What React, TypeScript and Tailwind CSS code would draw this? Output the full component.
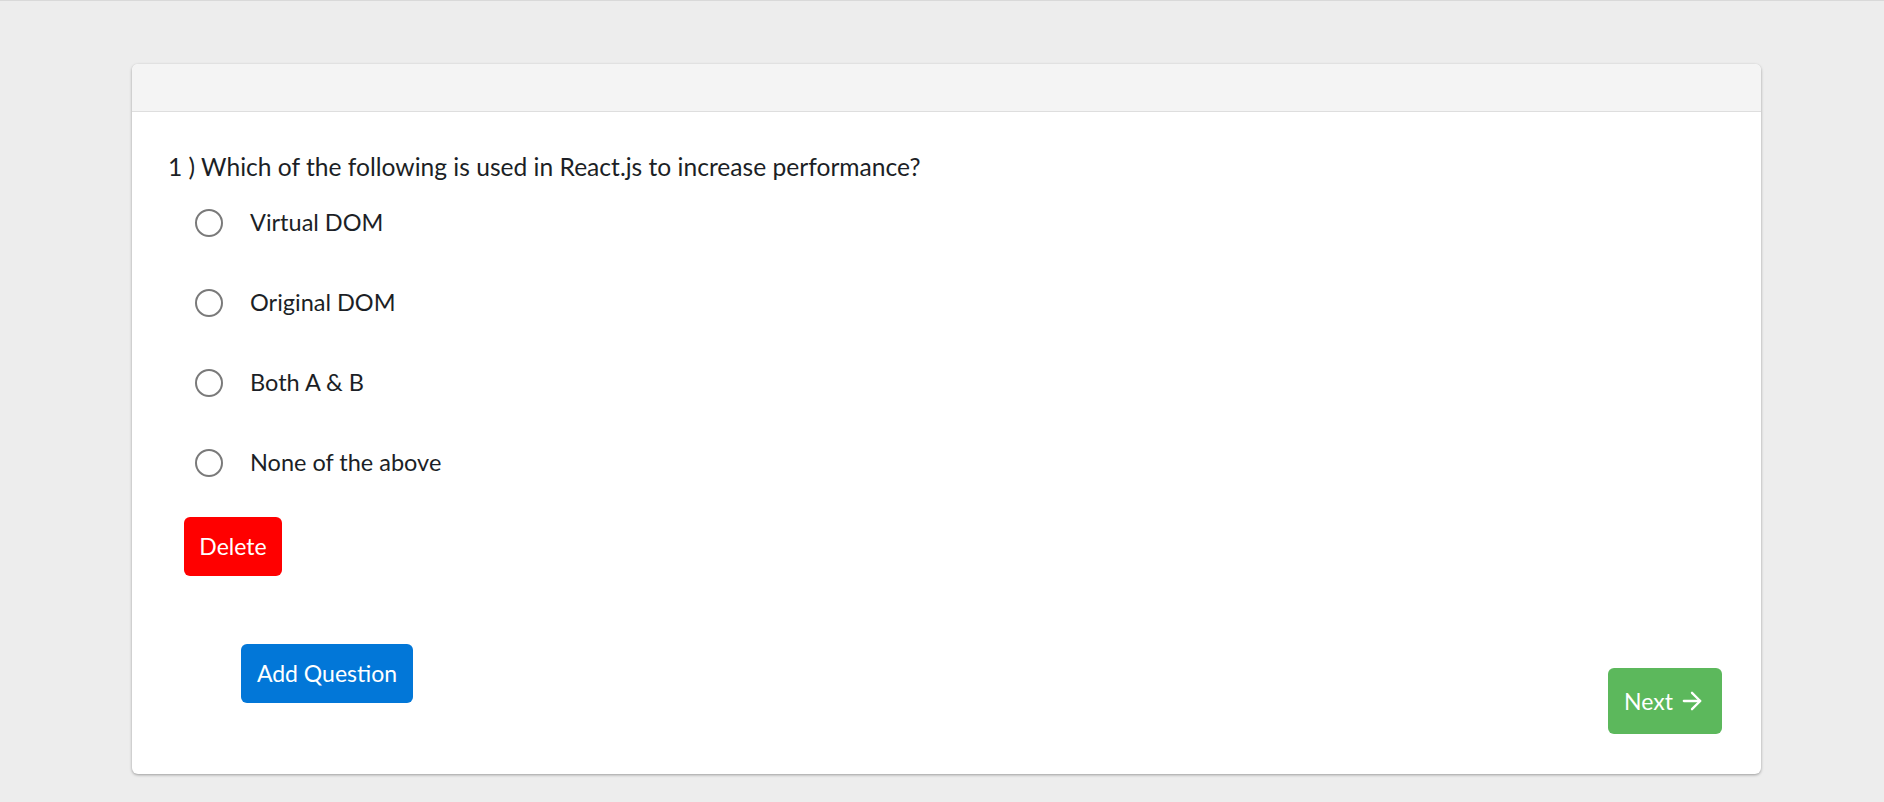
import { ArrowRight } from "lucide-react";

const options = ["Virtual DOM", "Original DOM", "Both A & B", "None of the above"];

export default function App() {
  return (
    <div
      className="min-h-[802px] w-full bg-[#ededed] border-t border-[#d9d9d9] pt-[63px] pb-[28px]"
      style={{ fontFamily: "Lato, 'Open Sans', sans-serif" }}
    >
      <div className="mx-[132px] w-[1629px] bg-white rounded-md shadow-[0_1px_3px_rgba(0,0,0,0.35)] overflow-hidden">
        <div className="h-[48px] bg-[#f4f4f4] border-b border-[#dedede]"></div>

        <div className="pl-[36px] pr-[39px] pt-[33px] pb-[40px]">
          <p className="text-[24.6px] leading-[44px] text-[#1c1f26]">
            1 ) Which of the following is used in React.js to increase performance?
          </p>

          <div className="mt-[14px] flex flex-col gap-[40px]">
            {options.map((opt) => (
              <label key={opt} className="flex items-center h-[40px]">
                <span className="ml-[27px] w-[28px] h-[28px] rounded-full border-2 border-[#7a7a7a] bg-white shrink-0"></span>
                <span className="ml-[27px] text-[23.5px] text-[#1c1f26]">{opt}</span>
              </label>
            ))}
          </div>

          <button className="mt-[34px] ml-[16px] h-[59px] w-[98px] rounded-md bg-[#ff0000] text-white text-[23px]">
            Delete
          </button>

          <div className="mt-[68px] flex justify-between items-start">
            <button className="ml-[73px] h-[59px] w-[172px] rounded-md bg-[#0277d8] text-white text-[23px]">
              Add Question
            </button>
            <button className="mt-[24px] h-[66px] w-[114px] rounded-md bg-[#5cb85c] text-white text-[23px] flex items-center justify-center gap-[5px]">
              Next
              <ArrowRight size={28} strokeWidth={2} />
            </button>
          </div>
        </div>
      </div>
    </div>
  );
}
